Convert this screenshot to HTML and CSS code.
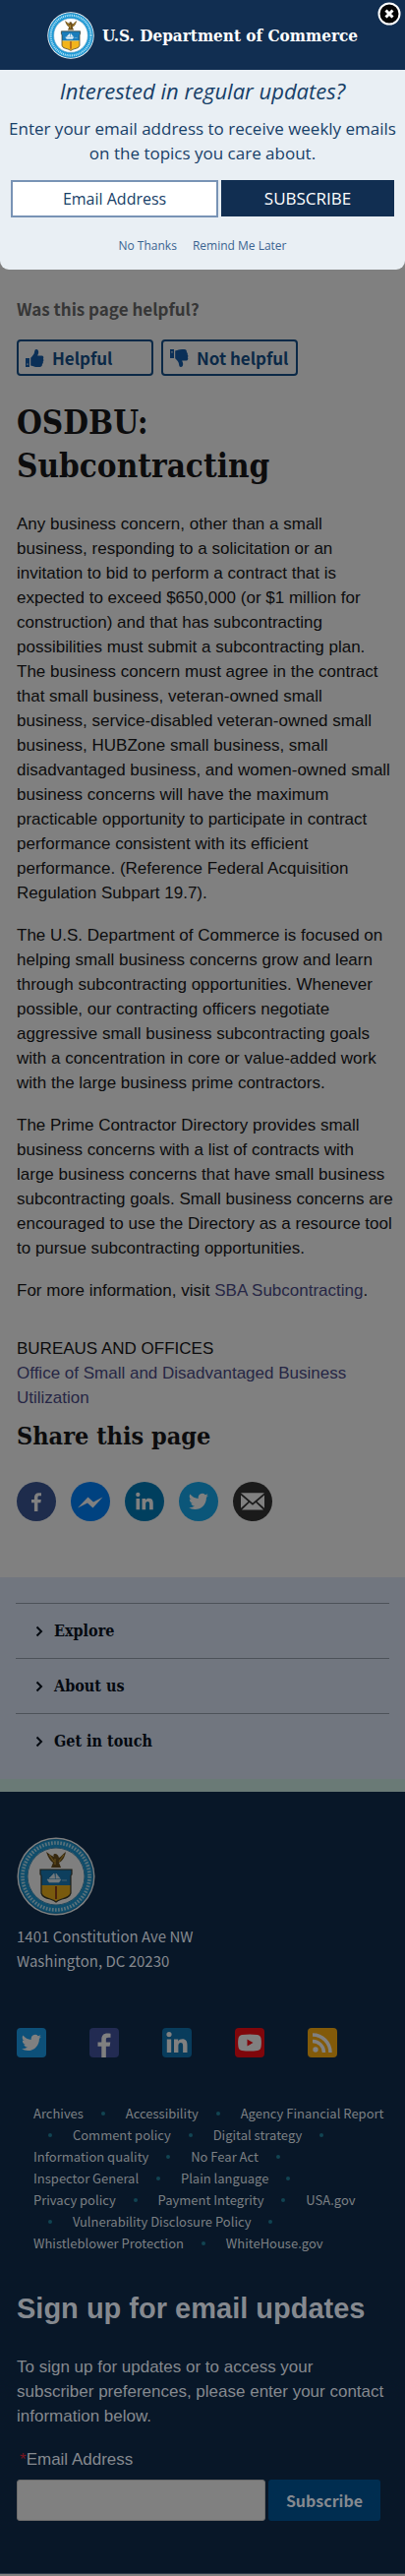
FILE: index.html
```html
<!DOCTYPE html>
<html lang="en">
<head>
<meta charset="utf-8">
<meta name="viewport" content="width=device-width, initial-scale=1">
<title>OSDBU: Subcontracting | U.S. Department of Commerce</title>
<link rel="stylesheet" href="styles.css">
</head>
<body>
<svg class="defs" aria-hidden="true">
  <symbol id="seal" viewBox="0 0 80 80">
    <circle cx="40" cy="40" r="39.5" fill="#fdfefe"/>
    <circle cx="40" cy="40" r="33.5" fill="none" stroke="#1e9ad6" stroke-width="8.5"/>
    <circle cx="40" cy="40" r="34" fill="none" stroke="#b9e4f5" stroke-width="3.6" stroke-dasharray="1.6 1.5"/>
    <circle cx="40" cy="40" r="37.6" fill="none" stroke="#1272a8" stroke-width=".8"/>
    <circle cx="40" cy="40" r="29" fill="none" stroke="#1272a8" stroke-width=".8"/>
    <path d="M30 15c2 6 4 9 7 11l-2 5h10l-2-5c4-2 6-6 7-11-3 2-5 5-7 6-1-3-2-4-4-4-2 0-2 2-1 3-3-1-5-3-8-5z" fill="#6b4f1d"/>
    <path d="M33 18l5 7M48 18l-5 7M39 22v6" stroke="#c79a35" stroke-width="1.2" fill="none"/>
    <path d="M24 33h32v5c-1 0-1 1-1 2v9H25v-9c0-1 0-2-1-2z" fill="#1a7dbb"/>
    <path d="M25 49h30v8c-1 4-5 5-9 6-3 1-5 2-6 3-1-1-3-2-6-3-4-1-8-2-9-6z" fill="#f2b41c"/>
    <path d="M24 33h32v5c-1 0-1 1-1 2v17c-1 4-5 5-9 6-3 1-5 2-6 3-1-1-3-2-6-3-4-1-8-2-9-6V40c0-1 0-2-1-2z" fill="none" stroke="#3a3a2a" stroke-width="1.2"/>
    <path d="M31 43h14l-2 3H33zM33 42l5-5 1 5zM40 42v-5l4 5zM46 44h5" fill="#e4f1f8" stroke="#e4f1f8" stroke-width=".6"/>
    <path d="M40 50v13" stroke="#96431b" stroke-width="2"/>
  </symbol>
  <symbol id="thumb" viewBox="0 0 20 20">
    <path d="M1 10h4v9H1zM2.300 16.800h1.300v-1.300H2.300z" fill-rule="evenodd"/>
    <path d="M6.200 9.700C8 8 9 6.500 9.600 5.500 10.200 4.500 9.900 1 11.800 1c2 0 2.700 2.200 2.300 4-.2 1-.8 1.800-.9 2.500h4.200c1.700 0 2.500 1.900 1.500 3.200.7.900.6 2.100-.2 2.800.4 1 .1 2-.8 2.600.3 1.700-.8 2.900-2.500 2.900-3.200 0-5.400-.2-7.200-1.100-.8-.3-1.500-.5-2-.5z"/>
  </symbol>
  <symbol id="bird" viewBox="0 0 24 24">
    <path d="M23.950 4.600a10 10 0 0 1-2.800.8 5 5 0 0 0 2.100-2.700c-1 .6-2 1-3.100 1.200a4.900 4.900 0 0 0-8.400 4.500A14 14 0 0 1 1.700 3.100a4.900 4.900 0 0 0 1.500 6.600 4.900 4.900 0 0 1-2.200-.6v.1a4.900 4.900 0 0 0 3.900 4.800 5 5 0 0 1-2.200.1 4.900 4.900 0 0 0 4.600 3.400A9.900 9.900 0 0 1 0 19.500 14 14 0 0 0 7.500 21.700c9.100 0 14-7.500 14-14v-.6c1-.7 1.800-1.600 2.450-2.500z"/>
  </symbol>
  <symbol id="linkedin" viewBox="0 0 24 24">
    <circle cx="4" cy="3.600" r="2.600"/>
    <path d="M1.800 8.500h4.400V22H1.800zM9 8.500h4.200v1.900c.8-1.400 2.300-2.200 4.200-2.200 4 0 5.100 2.500 5.100 6.200V22h-4.400v-6.900c0-2-.5-3.200-2.200-3.200-1.800 0-2.500 1.300-2.500 3.200V22H9z"/>
  </symbol>
  <symbol id="facebook" viewBox="0 0 24 24">
    <path d="M9.500 24V13.500H6V9.600h3.500V7c0-3.700 2.100-5.600 5.400-5.600 1.500 0 2.600.1 3.100.2v3.600h-2.200c-1.700 0-2.100.8-2.100 2v2.400h4.100l-.6 3.900h-3.500V24z"/>
  </symbol>
</svg>

<section class="dialog" role="dialog" aria-labelledby="dialog-title">
  <header class="dialog-header">
    <svg class="dialog-seal" aria-hidden="true"><use href="#seal"/></svg>
    <span class="dialog-brand">U.S. Department of Commerce</span>
    <button class="dialog-close" type="button" aria-label="Close">
      <svg viewBox="0 0 24 24" aria-hidden="true"><circle cx="12" cy="12" r="10.500" fill="#050505" stroke="#fff" stroke-width="2"/><path d="M8.500 8.500l7 7M15.500 8.500l-7 7" stroke="#fff" stroke-width="3"/></svg>
    </button>
  </header>
  <form class="dialog-body">
    <h2 class="dialog-title" id="dialog-title">Interested in regular updates?</h2>
    <p class="dialog-text">Enter your email address to receive weekly emails on the topics you care about.</p>
    <div class="dialog-row">
      <input class="dialog-input" type="email" placeholder="Email Address" aria-label="Email Address">
      <button class="dialog-submit" type="submit">SUBSCRIBE</button>
    </div>
    <div class="dialog-links">
      <a href="#">No Thanks</a>
      <a href="#">Remind Me Later</a>
    </div>
  </form>
</section>

<main class="content">
  <p class="feedback-title">Was this page helpful?</p>
  <div class="feedback">
    <button class="feedback-button" type="button"><svg class="thumb" aria-hidden="true"><use href="#thumb"/></svg>Helpful</button>
    <button class="feedback-button" type="button"><svg class="thumb thumb-down" aria-hidden="true"><use href="#thumb"/></svg>Not helpful</button>
  </div>
  <h1 class="page-title">OSDBU: Subcontracting</h1>
  <div class="article">
    <p>Any business concern, other than a small business, responding to a solicitation or an invitation to bid to perform a contract that is expected to exceed $650,000 (or $1 million for construction) and that has subcontracting possibilities must submit a subcontracting plan. The business concern must agree in the contract that small business, veteran-owned small business, service-disabled veteran-owned small business, HUBZone small business, small disadvantaged business, and women-owned small business concerns will have the maximum practicable opportunity to participate in contract performance consistent with its efficient performance. (Reference Federal Acquisition Regulation Subpart 19.7).</p>
    <p>The U.S. Department of Commerce is focused on helping small business concerns grow and learn through subcontracting opportunities. Whenever possible, our contracting officers negotiate aggressive small business subcontracting goals with a concentration in core or value-added work with the large business prime contractors.</p>
    <p>The Prime Contractor Directory provides small business concerns with a list of contracts with large business concerns that have small business subcontracting goals. Small business concerns are encouraged to use the Directory as a resource tool to pursue subcontracting opportunities.</p>
    <p>For more information, visit <a href="#">SBA Subcontracting</a>.</p>
  </div>
  <div class="bureaus">
    <div>BUREAUS AND OFFICES</div>
    <a href="#">Office of Small and Disadvantaged Business Utilization</a>
  </div>
  <h2 class="share-title">Share this page</h2>
  <div class="share">
    <a class="share-link share-facebook" href="#" aria-label="Facebook"><svg class="icon-20" aria-hidden="true"><use href="#facebook"/></svg></a>
    <a class="share-link share-messenger" href="#" aria-label="Messenger"><svg class="icon-28" viewBox="0 0 28 28" aria-hidden="true"><path d="M1 20.500L11.500 9.500l5.500 5 9.500-5L16.500 20.500l-5.500-5z"/></svg></a>
    <a class="share-link share-linkedin" href="#" aria-label="LinkedIn"><svg class="icon-20" aria-hidden="true"><use href="#linkedin"/></svg></a>
    <a class="share-link share-twitter" href="#" aria-label="Twitter"><svg class="icon-20" aria-hidden="true"><use href="#bird"/></svg></a>
    <a class="share-link share-email" href="#" aria-label="Email"><svg class="icon-24" viewBox="0 0 24 24" aria-hidden="true"><path d="M0 3.200h24L12 13.500zM0 5.500l7.500 6.500L0 18.800zM24 5.500v13.300L16.500 12zM8.800 13.100L12 15.800l3.200-2.700 7.800 7.400H1z"/></svg></a>
  </div>
</main>

<nav class="sections" aria-label="Footer sections">
  <ul class="sections-list">
    <li><button class="section-button" type="button"><svg class="chevron" viewBox="0 0 8 12" aria-hidden="true"><path d="M1.500 1.500L6 6l-4.500 4.500"/></svg>Explore</button></li>
    <li><button class="section-button" type="button"><svg class="chevron" viewBox="0 0 8 12" aria-hidden="true"><path d="M1.500 1.500L6 6l-4.500 4.500"/></svg>About us</button></li>
    <li><button class="section-button" type="button"><svg class="chevron" viewBox="0 0 8 12" aria-hidden="true"><path d="M1.500 1.500L6 6l-4.500 4.500"/></svg>Get in touch</button></li>
  </ul>
</nav>

<footer class="footer">
  <svg class="footer-seal" aria-hidden="true"><use href="#seal"/></svg>
  <address class="address">1401 Constitution Ave NW<br>Washington, DC 20230</address>
  <div class="social">
    <a class="social-link social-twitter" href="#" aria-label="Twitter"><svg class="icon-20" aria-hidden="true"><use href="#bird"/></svg></a>
    <a class="social-link social-facebook" href="#" aria-label="Facebook"><svg class="icon-26" aria-hidden="true"><use href="#facebook"/></svg></a>
    <a class="social-link social-linkedin" href="#" aria-label="LinkedIn"><svg class="icon-24" aria-hidden="true"><use href="#linkedin"/></svg></a>
    <a class="social-link social-youtube" href="#" aria-label="YouTube"><svg class="icon-24" viewBox="0 0 24 24" aria-hidden="true"><path fill-rule="evenodd" d="M4 4q8-1 16 0 3 .5 3.500 3.500.8 4.500 0 9Q23 19.500 20 20q-8 1-16 0-3-.5-3.500-3.500-.8-4.500 0-9Q1 4.500 4 4zM9.500 8.500v7l6-3.500z"/></svg></a>
    <a class="social-link social-rss" href="#" aria-label="RSS"><svg class="icon-20" viewBox="0 0 20 20" aria-hidden="true"><circle cx="3" cy="17" r="2.700"/><path d="M0 8.500A11.500 11.500 0 0 1 11.500 20M0 2A18 18 0 0 1 18 20" fill="none" stroke="#808080" stroke-width="3.500"/></svg></a>
  </div>
  <ul class="policies">
    <li><a href="#">Archives</a></li>
    <li class="dot" aria-hidden="true"></li>
    <li><a href="#">Accessibility</a></li>
    <li class="dot" aria-hidden="true"></li>
    <li><a href="#">Agency Financial Report</a></li>
    <li class="dot" aria-hidden="true"></li>
    <li><a href="#">Comment policy</a></li>
    <li class="dot" aria-hidden="true"></li>
    <li><a href="#">Digital strategy</a></li>
    <li class="dot" aria-hidden="true"></li>
    <li><a href="#">Information quality</a></li>
    <li class="dot" aria-hidden="true"></li>
    <li><a href="#">No Fear Act</a></li>
    <li class="dot" aria-hidden="true"></li>
    <li><a href="#">Inspector General</a></li>
    <li class="dot" aria-hidden="true"></li>
    <li><a href="#">Plain language</a></li>
    <li class="dot" aria-hidden="true"></li>
    <li><a href="#">Privacy policy</a></li>
    <li class="dot" aria-hidden="true"></li>
    <li><a href="#">Payment Integrity</a></li>
    <li class="dot" aria-hidden="true"></li>
    <li><a href="#">USA.gov</a></li>
    <li class="dot" aria-hidden="true"></li>
    <li><a href="#">Vulnerability Disclosure Policy</a></li>
    <li class="dot" aria-hidden="true"></li>
    <li><a href="#">Whistleblower Protection</a></li>
    <li class="dot" aria-hidden="true"></li>
    <li><a href="#">WhiteHouse.gov</a></li>
  </ul>
  <form class="signup">
    <h2 class="signup-title">Sign up for email updates</h2>
    <p class="signup-text">To sign up for updates or to access your subscriber preferences, please enter your contact information below.</p>
    <label class="signup-label" for="email"><span class="required">*</span>Email Address</label>
    <div class="signup-row">
      <input class="signup-input" id="email" type="email">
      <button class="signup-submit" type="submit">Subscribe</button>
    </div>
  </form>
</footer>
</body>
</html>
```

FILE: styles.css
```css
:root {
  --navy: #112e51;
  --navy-dim: #081728;
  --page-dim: #808080;
  --white-dim: #808080;
  --link-dim: #262645;
  --sans: "Liberation Sans", Arial, sans-serif;
  --humanist: "Noto Sans CJK SC", "Noto Sans", sans-serif;
  --open: "Open Sans", "Noto Sans", sans-serif;
  --serif: "DejaVu Serif Condensed", "DejaVu Serif", serif;
}

* { box-sizing: border-box; }

body {
  margin: 0;
  background: var(--page-dim);
  color: #0c0c0d;
  font: 17px/25px var(--sans);
}

h1, h2, p, ul { margin: 0; padding: 0; }
ul { list-style: none; }
a { text-decoration: none; }
button, input { margin: 0; border-radius: 0; }
.defs { position: absolute; width: 0; height: 0; }

/* Subscription dialog */
.dialog {
  background: #e9eff4;
  border-radius: 0 0 9px 9px;
  overflow: hidden;
}
.dialog-header {
  position: relative;
  display: flex;
  align-items: center;
  justify-content: center;
  gap: 8px;
  height: 71px;
  background: var(--navy);
}
.dialog-seal { width: 48px; height: 48px; }
.dialog-brand {
  color: #fff;
  font: bold 17px/24px var(--serif);
}
.dialog-close {
  position: absolute;
  top: 2px;
  right: 4px;
  width: 24px;
  height: 24px;
  padding: 0;
  border: 0;
  background: none;
}
.dialog-close svg { display: block; }
.dialog-body {
  padding: 6px 7px 15px;
  color: #174068;
  font-family: var(--open);
  text-align: center;
}
.dialog-title { font: italic 22px/30px var(--open); }
.dialog-text { margin-top: 11px; }
.dialog-row {
  display: grid;
  grid-template-columns: 6fr 5fr;
  gap: 3px;
  margin-top: 15px;
  padding: 0 4px;
}
.dialog-input {
  min-width: 0;
  height: 38px;
  border: 2px solid #7893b5;
  background: #fff;
  font: 16px/20px var(--open);
  text-align: center;
}
.dialog-input::placeholder { color: #174068; opacity: 1; }
.dialog-submit {
  height: 37px;
  border: 0;
  background: var(--navy);
  color: #fff;
  font: 17px/20px var(--open);
}
.dialog-links {
  display: flex;
  justify-content: center;
  gap: 16px;
  margin-top: 20px;
  font-size: 12px;
  line-height: 18px;
}
.dialog-links a { color: #3a6491; }

/* Page content */
.content { padding: 26px 11px 57px 17px; }
.feedback-title {
  color: #363636;
  font: bold 17px/28px var(--humanist);
}
.feedback { display: flex; gap: 8px; margin-top: 17px; }
.feedback-button {
  display: flex;
  align-items: center;
  gap: 8px;
  min-width: 139px;
  height: 37px;
  padding: 0 7px 0 6px;
  border: 2px solid #0b2947;
  border-radius: 4px;
  background: none;
  color: #0b2947;
  font: bold 17px/24px var(--humanist);
}
.thumb { width: 20px; height: 20px; fill: #0a2f57; }
.thumb-down { transform: rotate(180deg) scaleX(-1); }
.page-title {
  margin-top: 26px;
  font: bold 33px/44px var(--serif);
}
.article { display: grid; gap: 18px; margin-top: 24px; }
.article a, .bureaus a { color: var(--link-dim); }
.bureaus { margin-top: 34px; }
.share-title {
  margin-top: 11px;
  font: bold 25px/32px var(--serif);
}
.share { display: flex; gap: 15px; margin-top: 30px; }
.share-link {
  display: grid;
  place-items: center;
  width: 40px;
  height: 40px;
  border-radius: 50%;
}
.share-link svg, .social-link svg { fill: var(--white-dim); }
.share-facebook { background: #1e2c4c; }
.share-messenger { background: #004280; }
.share-linkedin { background: #003f5e; }
.share-twitter { background: #0b5679; }
.share-email { background: #1a1a1a; }
.icon-20 { width: 20px; height: 20px; }
.icon-24 { width: 24px; height: 24px; }
.icon-26 { width: 26px; height: 26px; }
.icon-28 { width: 28px; height: 28px; }

/* Footer sections */
.sections {
  padding: 26px 16px 11px;
  border-bottom: 13px solid #6a7a76;
  background: #71767f;
}
.section-button {
  display: flex;
  align-items: center;
  gap: 11px;
  width: 100%;
  height: 56px;
  padding: 0 20px;
  border: 0;
  border-top: 1px solid #4d5259;
  background: none;
  color: #04090f;
  font: bold 16px/24px var(--serif);
}
.chevron { width: 8px; height: 12px; fill: none; stroke: #04090f; stroke-width: 2; }

/* Footer */
.footer {
  padding: 46px 17px 53px;
  border-bottom: 1px solid #2b3a4a;
  background: var(--navy-dim);
  color: #85898f;
}
.footer-seal { display: block; width: 80px; height: 80px; filter: brightness(.5); }
.address {
  margin-top: 8px;
  font: 15px/25px var(--humanist);
}
.social { display: flex; gap: 44px; margin-top: 56px; }
.social-link {
  display: grid;
  place-items: center;
  width: 30px;
  height: 30px;
  border-radius: 4px;
  overflow: hidden;
}
.social-twitter { background: #0d5079; }
.social-facebook { background: #222b52; align-items: end; }
.social-linkedin { background: #083c5c; }
.social-youtube { background: #80060b; }
.social-rss { background: #825a09; }
.policies {
  margin-top: 46px;
  padding-left: 17px;
  font: 13px/22px var(--humanist);
}
.policies li { display: inline-block; vertical-align: top; }
.policies a { color: #7c8084; }
.policies .dot { width: 37px; height: 22px; padding: 9px 15px; }
.dot::before {
  content: "";
  display: block;
  width: 4px;
  height: 4px;
  border-radius: 50%;
  background: #114452;
}
.signup-title {
  margin-top: 37px;
  font: bold 29px/36px var(--sans);
}
.signup-text { margin-top: 29px; }
.signup-label { display: block; margin-top: 19px; padding-left: 3px; }
.required { color: #7a1520; }
.signup-row {
  display: grid;
  grid-template-columns: 253px 114px;
  gap: 3px;
  margin-top: 8px;
}
.signup-input {
  min-width: 0;
  height: 42px;
  border: 1px solid #6b6b6b;
  border-radius: 3px;
  background: var(--white-dim);
}
.signup-submit {
  height: 42px;
  border: 0;
  border-radius: 3px;
  background: #002d50;
  color: #85898f;
  font: bold 16px/24px var(--humanist);
}
```
